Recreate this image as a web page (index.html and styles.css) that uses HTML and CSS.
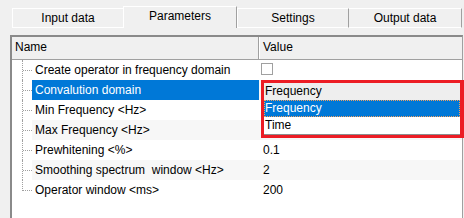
FILE: index.html
```html
<!DOCTYPE html>
<html lang="en">
<head>
    <meta charset="UTF-8">
    <title>Parameters</title>
    <link rel="stylesheet" href="styles.css">
</head>
<body>
    <div class="tabs">
        <div class="tab t1">Input data</div>
        <div class="tab t2 active">Parameters</div>
        <div class="tab t3">Settings</div>
        <div class="tab t4">Output data</div>
    </div>

    <div class="grid">
        <div class="head">
            <div class="hname">Name</div>
            <div class="hvalue">Value</div>
        </div>

        <div class="row">
            <div class="tree"></div>
            <div class="label">Create operator in frequency domain</div>
            <div class="value"><span class="check"></span></div>
        </div>
        <div class="row even selected">
            <div class="tree"></div>
            <div class="label">Convalution domain</div>
            <div class="value">
                <div class="dropdown">
                    <div class="combo">Frequency</div>
                    <div class="list">
                        <div class="item current">Frequency</div>
                        <div class="item">Time</div>
                    </div>
                </div>
            </div>
        </div>
        <div class="row">
            <div class="tree"></div>
            <div class="label">Min Frequency &lt;Hz&gt;</div>
            <div class="value"></div>
        </div>
        <div class="row even">
            <div class="tree"></div>
            <div class="label">Max Frequency &lt;Hz&gt;</div>
            <div class="value"></div>
        </div>
        <div class="row">
            <div class="tree"></div>
            <div class="label">Prewhitening &lt;%&gt;</div>
            <div class="value">0.1</div>
        </div>
        <div class="row even">
            <div class="tree"></div>
            <div class="label">Smoothing spectrum&nbsp; window &lt;Hz&gt;</div>
            <div class="value">2</div>
        </div>
        <div class="row last">
            <div class="tree"></div>
            <div class="label">Operator window &lt;ms&gt;</div>
            <div class="value">200</div>
        </div>
    </div>
</body>
</html>
```

FILE: styles.css
```css
body {
    margin: 0;
    background: #f0f0f0;
    font-family: "Liberation Sans", Arial, sans-serif;
    font-size: 12px;
    color: #000;
    height: 218px;
    overflow: hidden;
}

.tabs {
    display: flex;
    align-items: flex-end;
    height: 28px;
    padding-left: 12px;
}

.tab {
    box-sizing: border-box;
    height: 20px;
    line-height: 18px;
    text-align: center;
    border-top: 1px solid #fff;
    border-left: 1px solid #fff;
    border-right: 1px solid #a0a0a0;
    border-bottom: 1px solid #fff;
}

.t1 { width: 111px; border-right: none; }
.t2 { width: 114px; }
.t3 { width: 112px; }
.t4 { width: 113px; border-left: none; }

.tab.active {
    height: 22px;
    line-height: 18px;
    border-bottom: none;
}

.grid {
    margin: 7px 1px 0 10px;
    background: #fff;
    border-top: 2px solid #8a8a8a;
    border-left: 2px solid #8a8a8a;
    border-right: 1px solid #a0a0a0;
    height: 181px;
}

.head {
    display: flex;
    height: 22px;
    background: #f0f0f0;
    border-bottom: 1px solid #a0a0a0;
    line-height: 20px;
}

.hname {
    width: 243px;
    padding-left: 3px;
    border-right: 1px solid #a0a0a0;
}

.hvalue {
    flex: 1;
    padding-left: 3px;
    border-left: 1px solid #fff;
}

.row {
    display: flex;
    height: 20px;
    line-height: 20px;
}

.tree {
    position: relative;
    width: 20px;
    flex: 0 0 20px;
}

.tree::before {
    content: "";
    position: absolute;
    left: 10px;
    top: 0;
    height: 20px;
    border-left: 1px dotted #a0a0a0;
}

.tree::after {
    content: "";
    position: absolute;
    left: 11px;
    top: 10px;
    width: 9px;
    border-top: 1px dotted #a0a0a0;
}

.row.last .tree::before {
    height: 11px;
}

.label {
    width: 224px;
    padding-left: 3px;
    white-space: nowrap;
}

.value {
    position: relative;
    flex: 1;
    padding-left: 4px;
}

.row.even .label,
.row.even .value {
    background: #f7f7f7;
}

.row.selected .label {
    background: #0078d7;
    color: #fff;
}

.check {
    display: inline-block;
    box-sizing: border-box;
    width: 12px;
    height: 12px;
    margin-left: -2px;
    margin-top: 3px;
    vertical-align: top;
    border: 1px solid #a0a0a0;
    background: #fff;
}

.dropdown {
    position: absolute;
    left: 2px;
    top: 0;
    width: 196px;
    border: 3px solid #ec1c24;
    border-right-width: 4px;
    background: #fff;
    line-height: 17px;
    z-index: 2;
}

.combo {
    height: 17px;
    padding-left: 1px;
    background: #eeeeee;
}

.list {
    border-bottom: 1px solid #8c8c8c;
}

.item {
    height: 17px;
    padding-left: 1px;
}

.item.current {
    background: #0078d7;
    color: #fff;
    outline: 1px dotted #f0a060;
    outline-offset: -1px;
}
```
